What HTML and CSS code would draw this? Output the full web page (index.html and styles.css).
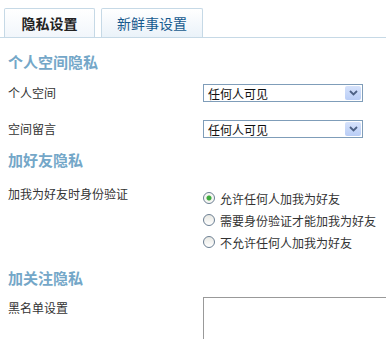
FILE: index.html
```html
<!DOCTYPE html>
<html lang="zh-CN">
<head>
    <meta charset="UTF-8">
    <meta name="viewport" content="width=device-width, initial-scale=1.0">
    <title>隐私设置</title>
    <link rel="stylesheet" href="styles.css">
</head>
<body>

<div class="tabs">
    <a href="#" class="tab active">隐私设置</a>
    <a href="#" class="tab">新鲜事设置</a>
</div>

<div class="content">
    <h3>个人空间隐私</h3>
    <div class="row first">
        <div class="label">个人空间</div>
        <div class="select">
            <span>任何人可见</span>
            <span class="arrow"><svg width="9" height="6" viewBox="0 0 9 6"><path d="M1 1 L4.5 4.5 L8 1" fill="none" stroke="#4d6185" stroke-width="1.8"/></svg></span>
        </div>
    </div>
    <div class="row second">
        <div class="label">空间留言</div>
        <div class="select">
            <span>任何人可见</span>
            <span class="arrow"><svg width="9" height="6" viewBox="0 0 9 6"><path d="M1 1 L4.5 4.5 L8 1" fill="none" stroke="#4d6185" stroke-width="1.8"/></svg></span>
        </div>
    </div>

    <h3>加好友隐私</h3>
    <div class="row top">
        <div class="label">加我为好友时身份验证</div>
        <div class="radios">
            <label class="radio"><span class="dot checked"></span>允许任何人加我为好友</label>
            <label class="radio"><span class="dot"></span>需要身份验证才能加我为好友</label>
            <label class="radio"><span class="dot"></span>不允许任何人加我为好友</label>
        </div>
    </div>

    <h3 class="follow">加关注隐私</h3>
    <div class="row top blacklist">
        <div class="label">黑名单设置</div>
        <div class="textarea"></div>
    </div>
</div>

</body>
</html>
```

FILE: styles.css
```css
body {
    margin: 0;
    padding: 0;
    background-color: white;
    font-family: "Noto Sans CJK SC", "DejaVu Sans", sans-serif;
    font-size: 12px;
    color: #333;
    height: 339px;
    overflow: hidden;
}

.tabs {
    display: flex;
    gap: 6px;
    padding: 8px 0 0 4px;
    border-bottom: 1px solid #c6d9e6;
}

.tab {
    display: flex;
    align-items: center;
    justify-content: center;
    height: 28px;
    border: 1px solid #c6d9e6;
    border-bottom: none;
    border-radius: 2px 2px 0 0;
    background: linear-gradient(#ffffff, #eaf2f9);
    font-size: 14px;
    color: #165a8e;
    text-decoration: none;
}

.tab.active {
    width: 89px;
    font-weight: bold;
    color: #222;
    background: linear-gradient(#ffffff, #f1f6fb);
}

.tab:not(.active) {
    width: 100px;
}

.content {
    padding-left: 8px;
}

h3 {
    margin: 14px 0 0 0;
    font-size: 15px;
    line-height: 20px;
    color: #74a7c8;
}

.row {
    display: flex;
    align-items: center;
}

.row.first {
    margin-top: 12px;
}

.row.second {
    margin-top: 18px;
}

.row.second + h3 {
    margin-top: 12px;
}

.row.top {
    align-items: flex-start;
    margin-top: 15px;
}

.label {
    flex-shrink: 0;
    width: 195px;
    line-height: 18px;
}

.select {
    display: flex;
    align-items: center;
    justify-content: space-between;
    box-sizing: border-box;
    width: 160px;
    height: 18px;
    padding: 0 1px 0 4px;
    border: 1px solid #7f9db9;
    color: #111;
}

.arrow {
    display: flex;
    align-items: center;
    justify-content: center;
    width: 16px;
    height: 14px;
    border-radius: 2px;
    background: linear-gradient(#d6e2fb, #b9cdf6);
}

.radios {
    margin-top: 2px;
}

.radio {
    display: flex;
    align-items: center;
    height: 22px;
}

.dot {
    box-sizing: border-box;
    width: 12px;
    height: 12px;
    margin-right: 5px;
    border: 1px solid #6c7f93;
    border-radius: 50%;
    background: linear-gradient(#e8e8e3, #ffffff);
}

.dot.checked {
    background: radial-gradient(circle, #3eaa3e 0, #3eaa3e 2px, #f4f4f0 3px, #ffffff 100%);
}

h3.follow {
    margin-top: 15px;
}

.row.blacklist {
    margin-top: 9px;
}

.blacklist .label {
    margin-top: 2px;
}

.textarea {
    flex-shrink: 0;
    width: 200px;
    height: 60px;
    border: 1px solid #999;
}
```
